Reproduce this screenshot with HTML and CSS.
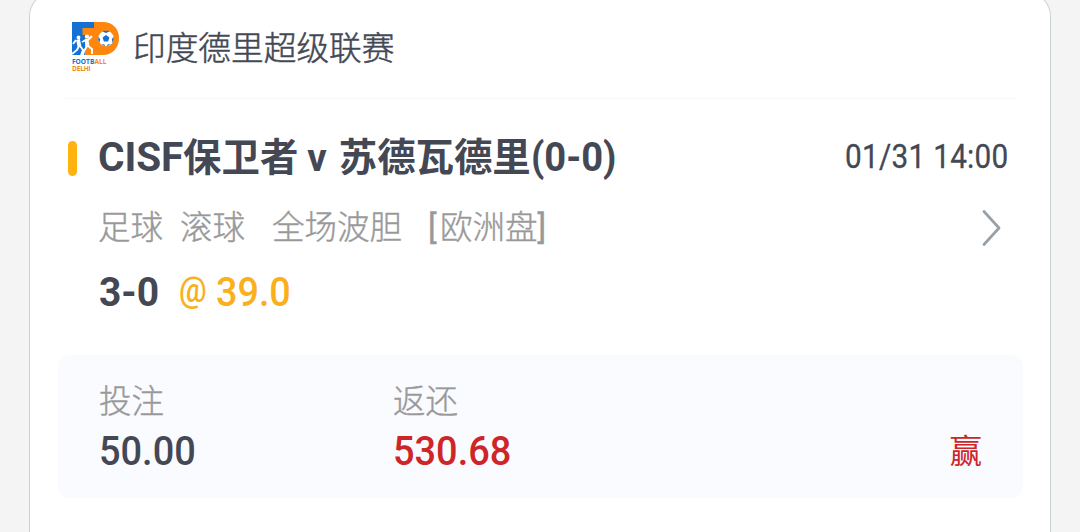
FILE: index.html
```html
<!DOCTYPE HTML>
<html lang="zh-CN">
	<head>
		<meta charset="utf-8"/>
		<title>注单</title>
		<link rel="stylesheet" href="styles.css">
	</head>
	<body>
		<div class="card">
			<div class="league">
				<svg class="logo" viewBox="0 0 50 52">
					<path fill="#ff860d" d="M10 1h22c10 0 16 7 16 16s-6 17-16 17H10z"/>
					<path fill="#1470d2" d="M1 1h22v6H11.500v7H14v20H1z"/>
					<circle cx="7.500" cy="16.500" r="1.900" fill="#fff"/>
					<circle cx="16" cy="15.500" r="2.100" fill="#fff"/>
					<path fill="none" stroke="#fff" stroke-width="3.800" d="M7 18.500l1.500 7M15.500 18l1 8"/>
					<path fill="none" stroke="#fff" stroke-width="1.900" d="M5 19l-3 4M8 25l-2 4-5 4M9 25l3 4-2 5M15 19l-4 2M17 19l4-4M16 25l-3 5-1 4M17 25l4 3v5"/>
					<circle cx="35" cy="17.500" r="7.800" fill="#fff"/>
					<path fill="#1470d2" d="M35 14l3.400 2.500-1.300 4h-4.200l-1.300-4zM31.500 10.500l3.500 1.500 3.500-1.500-1.500-.7h-4zM27.400 15.500l1.800 3-.8 3.200-1.200-3.200zM42.600 15.500l-1.800 3 .8 3.200 1.200-3.200zM30.300 23.600l2.900-.4 1 2zM39.700 23.600l-2.900-.4-1 2z"/>
				</svg>
				<div class="logo-text">
					<p>FOOTB<i>ALL</i></p>
					<p class="city">DELHI</p>
				</div>
				<span class="league-name">印度德里超级联赛</span>
			</div>
			<div class="match">
				<i class="bar"></i>
				<div class="teams"><span class="en">CISF</span><span>保卫者</span><span class="vs">v</span><span>苏德瓦德里</span><span class="score">(0-0)</span></div>
				<span class="time">01/31 14:00</span>
			</div>
			<div class="play">
				<span class="sport">足球</span>
				<span class="live">滚球</span>
				<span class="type">全场波胆</span>
				<span class="market"><b>[</b>欧洲盘<b>]</b></span>
				<svg class="arrow" viewBox="0 0 20 38"><path d="M2 2.500l15 16.500L2 35.500"/></svg>
			</div>
			<div class="odds">
				<span class="pick">3-0</span>
				<span class="at">@</span>
				<span class="rate">39.0</span>
			</div>
			<div class="result">
				<div class="col">
					<p class="label">投注</p>
					<p class="num">50.00</p>
				</div>
				<div class="col">
					<p class="label">返还</p>
					<p class="num red">530.68</p>
				</div>
				<span class="win">赢</span>
			</div>
		</div>
	</body>
</html>
```
FILE: styles.css
```css
*{box-sizing: border-box;}
body{margin: 0;height: 532px;overflow: hidden;background: #f4f4f4;font-family: Roboto,"Noto Sans CJK SC",sans-serif;color: #434854;}
p{margin: 0;}
span{white-space: nowrap;}
.card{width: 1022px;height: 540px;margin: -8px 0 0 29px;padding: 8px 27px 0 28px;background: #fff;border: 1px solid #c9d3d6;border-bottom: 0;border-radius: 24px 24px 0 0;}

.league{display: flex;height: 98px;margin: 0 7px;padding: 20px 0 0 6px;border-bottom: 1px solid #f8f8f8;}
.logo{width: 50px;height: 52px;margin-right: 12px;}
.logo-text{width: 50px;margin: 37px 12px 0 -61px;font: bold 6.6px/7px "Open Sans",sans-serif;color: #1470d2;letter-spacing: 0;}
.logo-text i{font-style: normal;color: #ff860d;}
.logo-text .city{color: #f28a20;letter-spacing: -.2px;}
.league-name{margin-left: -1px;font-size: 32.7px;line-height: 56px;font-weight: 300;-webkit-text-stroke: .5px;}

.match{display: flex;align-items: center;height: 60px;margin-top: 29px;padding: 0 15px 0 10px;}
.bar{width: 9px;height: 35px;margin-right: 21px;border-radius: 5px;background: #ffb30f;}
.teams{display: flex;align-items: center;font-size: 38.4px;line-height: 60px;font-weight: bold;}
.en{margin-top: -2px;font-size: 40.5px;letter-spacing: -.1px;}
.vs{margin: 0 12px 0 9px;}
.score{width: 83px;margin-top: -2px;font-size: 41px;transform: scaleX(.93);transform-origin: 0 50%;}
.time{width: 163px;margin: 0 0 3px auto;font-size: 32.5px;line-height: 54px;letter-spacing: .3px;transform: scaleX(.915);transform-origin: 0 50%;-webkit-text-stroke: .3px;}

.play{display: flex;align-items: center;height: 50px;margin-top: 15px;padding: 0 21px 0 40px;font-size: 32.5px;line-height: 50px;font-weight: 300;color: #999;-webkit-text-stroke: .4px;}
.live{margin-left: 17px;}
.type{margin-left: 27px;}
.market{margin-left: 26px;}
.market b{display: inline-block;width: 12px;font-weight: 400;}
.arrow{width: 20px;height: 38px;margin-left: auto;}
.arrow path{fill: none;stroke: #98a0aa;stroke-width: 2.8;stroke-linecap: round;stroke-linejoin: round;}

.odds{display: flex;align-items: center;height: 60px;margin-top: 9px;padding-left: 41px;font-size: 41px;line-height: 60px;}
.pick{width: 60px;font-weight: bold;transform: scaleX(.95);transform-origin: 0 50%;}
.at{width: 28px;margin: -3px 9px 0 20px;font-size: 35px;font-weight: 500;color: #f9b01c;transform: scaleX(.88);transform-origin: 0 50%;}
.rate{color: #f9b01c;font-weight: 500;transform: scaleX(.92);transform-origin: 0 50%;}

.result{display: flex;height: 143px;margin-top: 33px;padding: 24px 41px 0;border-radius: 12px;background: #f9fbff;}
.col{width: 294px;}
.label{font-size: 32.5px;line-height: 46px;font-weight: 300;color: #999;-webkit-text-stroke: .4px;}
.num{font-size: 41px;line-height: 52px;font-weight: 500;transform: scaleX(.925);transform-origin: 0 50%;}
.red{color: #ce2529;}
.win{align-self: flex-start;margin: 49px 0 0 auto;font-size: 32.5px;line-height: 48px;color: #ce2529;}
```
